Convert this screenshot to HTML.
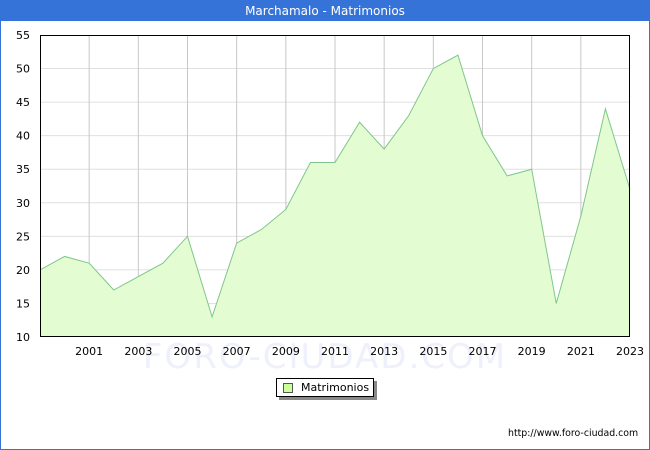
<!DOCTYPE html>
<html><head><meta charset="utf-8">
<style>
html,body{margin:0;padding:0;background:#fff;}
body{width:650px;height:450px;position:relative;overflow:hidden;font-family:"DejaVu Sans","Liberation Sans",sans-serif;}
#frame{position:absolute;left:0;top:0;width:648px;height:448px;border:1px solid #3673d8;}
#title{position:absolute;left:0;top:0;width:650px;height:21px;background:#3673d8;color:#fff;font-size:12px;line-height:22px;text-align:center;}
svg{position:absolute;left:0;top:0;}
svg text{font-family:"DejaVu Sans","Liberation Sans",sans-serif;font-size:11px;fill:#000;}
#legend{position:absolute;left:276px;top:378px;width:96px;height:17px;border:1px solid #000;background:#fff;box-shadow:3px 3px 0 #888;font-size:11px;line-height:17px;}
#legend i{position:absolute;left:6px;top:4px;width:8px;height:8px;background:#ccff99;border:1px solid #555;}
#legend span{position:absolute;left:24px;top:0;}
#foot{position:absolute;left:508px;top:428px;font-size:9.4px;color:#000;}
</style></head><body>
<div id="frame"></div>
<div id="title">Marchamalo - Matrimonios</div>
<svg id="c" width="650" height="450"></svg>
<div id="legend"><i></i><span>Matrimonios</span></div>
<div id="foot">http://www.foro-ciudad.com</div>
<script>
var d=[20,22,21,17,19,21,25,13,24,26,29,36,36,42,38,43,50,52,40,34,35,15,28,44,32];
var L=40,R=630,T=35,B=337;
function X(i){return L+i*(R-L)/24;}
function Y(v){return B-(v-10)*(B-T)/45;}
var s='';
s+='<text x="325" y="368" text-anchor="middle" style="font-size:34px;fill:#eef0fb;letter-spacing:2px">FORO-CIUDAD.COM</text>';
for(var v=15;v<=50;v+=5){s+='<line x1="'+L+'" x2="'+R+'" y1="'+Y(v)+'" y2="'+Y(v)+'" stroke="#e0e0e0"/>';}
for(var i=2;i<24;i+=2){s+='<line x1="'+X(i)+'" x2="'+X(i)+'" y1="'+T+'" y2="'+B+'" stroke="#c8c8c8"/>';}
var p='M'+X(0)+','+B;
for(var i=0;i<d.length;i++)p+=' L'+X(i)+','+Y(d[i]);
p+=' L'+X(24)+','+B+' Z';
s+='<path d="'+p+'" fill="#e4fcd2" stroke="none"/>';
var q='M'+X(0)+','+Y(d[0]);
for(var i=1;i<d.length;i++)q+=' L'+X(i)+','+Y(d[i]);
s+='<path d="'+q+'" fill="none" stroke="#7fc68a" stroke-width="1"/>';
s+='<rect x="'+(L+0.5)+'" y="'+(T+0.5)+'" width="'+(R-L-1)+'" height="'+(B-T-1)+'" fill="none" stroke="#000"/>';
for(var v=10;v<=55;v+=5){s+='<text x="30" y="'+(Y(v)+4)+'" text-anchor="end">'+v+'</text>';}
for(var i=2;i<=24;i+=2){s+='<text x="'+X(i)+'" y="355" text-anchor="middle">'+(1999+i)+'</text>';}
document.getElementById('c').innerHTML=s;
</script>
</body></html>
